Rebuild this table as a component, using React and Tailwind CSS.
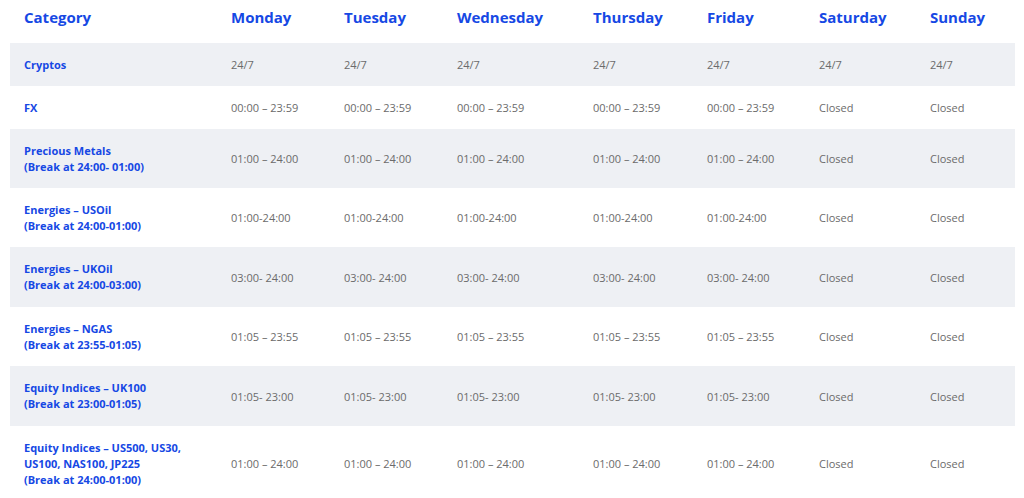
const days = ["Monday", "Tuesday", "Wednesday", "Thursday", "Friday", "Saturday", "Sunday"];

// tall: row sits one px taller in the original layout
const rows = [
  { name: ["Cryptos"], hours: ["24/7", "24/7", "24/7", "24/7", "24/7", "24/7", "24/7"] },
  { name: ["FX"], hours: ["00:00 – 23:59", "00:00 – 23:59", "00:00 – 23:59", "00:00 – 23:59", "00:00 – 23:59", "Closed", "Closed"] },
  { name: ["Precious Metals", "(Break at 24:00- 01:00)"], hours: ["01:00 – 24:00", "01:00 – 24:00", "01:00 – 24:00", "01:00 – 24:00", "01:00 – 24:00", "Closed", "Closed"] },
  { name: ["Energies – USOil", "(Break at 24:00-01:00)"], hours: ["01:00-24:00", "01:00-24:00", "01:00-24:00", "01:00-24:00", "01:00-24:00", "Closed", "Closed"] },
  { name: ["Energies – UKOil", "(Break at 24:00-03:00)"], hours: ["03:00- 24:00", "03:00- 24:00", "03:00- 24:00", "03:00- 24:00", "03:00- 24:00", "Closed", "Closed"], tall: true },
  { name: ["Energies – NGAS", "(Break at 23:55-01:05)"], hours: ["01:05 – 23:55", "01:05 – 23:55", "01:05 – 23:55", "01:05 – 23:55", "01:05 – 23:55", "Closed", "Closed"] },
  { name: ["Equity Indices – UK100", "(Break at 23:00-01:05)"], hours: ["01:05- 23:00", "01:05- 23:00", "01:05- 23:00", "01:05- 23:00", "01:05- 23:00", "Closed", "Closed"], tall: true },
  { name: ["Equity Indices – US500, US30,", "US100, NAS100, JP225", "(Break at 24:00-01:00)"], hours: ["01:00 – 24:00", "01:00 – 24:00", "01:00 – 24:00", "01:00 – 24:00", "01:00 – 24:00", "Closed", "Closed"] },
];

export default function App() {
  return (
    <div className="min-h-screen bg-white pl-[10px] pr-[9px] font-['Open_Sans',sans-serif]">
      <table className="w-[1005px] table-fixed border-collapse">
        <colgroup>
          <col className="w-[207px]" />
          <col className="w-[113px]" />
          <col className="w-[113px]" />
          <col className="w-[136px]" />
          <col className="w-[114px]" />
          <col className="w-[112px]" />
          <col className="w-[111px]" />
          <col className="w-[99px]" />
        </colgroup>
        <thead>
          <tr className="h-[43px]">
            <th className="pl-[14px] pt-[8px] pb-[17px] text-left align-top text-[15px] leading-[18px] font-bold text-[#1648e4]">
              Category
            </th>
            {days.map((d) => (
              <th
                key={d}
                className="pl-[14px] pt-[8px] pb-[17px] text-left align-top text-[15px] leading-[18px] font-bold text-[#1648e4]"
              >
                {d}
              </th>
            ))}
          </tr>
        </thead>
        <tbody>
          {rows.map((r, i) => (
            <tr key={i} className={i % 2 === 0 ? "bg-[#eef0f4]" : "bg-white"}>
              <td
                className={`pl-[14px] pt-[14px] align-middle text-[11px] leading-[16px] font-bold text-[#1648e4] ${
                  r.tall ? "pb-[14px]" : "pb-[13px]"
                }`}
              >
                {r.name.map((line) => (
                  <div key={line}>{line}</div>
                ))}
              </td>
              {r.hours.map((h, j) => (
                <td
                  key={j}
                  className="pl-[14px] pt-[14px] pb-[13px] align-middle text-[11px] leading-[16px] text-[#6b6b6b] whitespace-nowrap"
                >
                  {h}
                </td>
              ))}
            </tr>
          ))}
        </tbody>
      </table>
    </div>
  );
}
